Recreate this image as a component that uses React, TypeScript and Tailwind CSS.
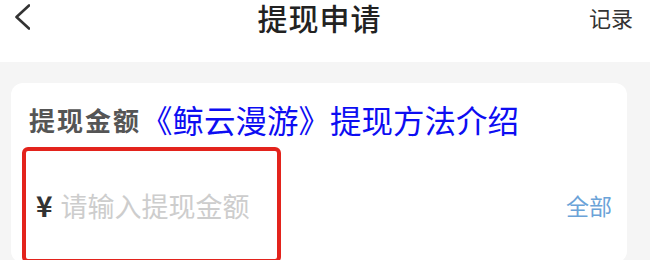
import React from 'react';

const font = { fontFamily: '"Noto Sans CJK SC", "Noto Sans", sans-serif' };

const Header = () => (
  <header className="h-[62px] bg-white">
    <div className="flex h-[34px] items-center pl-[14px] pr-[17px]">
      <svg width="16" height="26" viewBox="0 0 16 26" className="shrink-0">
        <polyline points="15,1.5 2.5,13 15,24.5" fill="none" stroke="#333" strokeWidth="2.6" strokeLinecap="round" strokeLinejoin="round" />
      </svg>
      <h1 className="flex-1 pl-[20px] text-center text-[30px] leading-[34px] font-medium tracking-[1px] text-[#222]">提现申请</h1>
      <span className="text-[22px] leading-none text-[#333]">记录</span>
    </div>
  </header>
);

export default function App() {
  return (
    <div className="h-[260px] w-[650px] overflow-hidden bg-[#f5f5f5]" style={font}>
      <Header />
      <div className="pt-[21px] pl-[11px]">
        <section className="w-[616px] rounded-[12px] bg-white px-[11px] pt-[20px]">
          <div className="flex h-[34px] items-center pl-[7px]">
            <span className="text-[26px] leading-none font-semibold tracking-[2px] text-[#555]">提现金额</span>
            <span className="text-[31.5px] leading-none text-[#0d0df2]">《鲸云漫游》提现方法介绍</span>
          </div>
          <div className="mt-[10px] flex items-center justify-between pr-[4px]">
            <div className="flex h-[116px] w-[259px] items-center whitespace-nowrap rounded-[6px] border-[4px] border-[#e3231c] pl-[10px]">
              <span className="text-[28px] leading-none font-bold text-[#333]">¥</span>
              <span className="ml-[8px] text-[27px] leading-none text-[#cdcdcd]">请输入提现金额</span>
            </div>
            <span className="text-[23px] leading-none text-[#6ba3d8]">全部</span>
          </div>
        </section>
      </div>
    </div>
  );
}
